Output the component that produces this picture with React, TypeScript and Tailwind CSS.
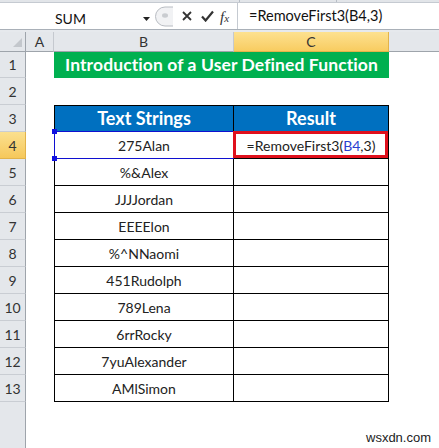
import React from "react";

const rows: { n: number; b: string }[] = [
  { n: 5, b: "%&Alex" },
  { n: 6, b: "JJJJordan" },
  { n: 7, b: "EEEElon" },
  { n: 8, b: "%^NNaomi" },
  { n: 9, b: "451Rudolph" },
  { n: 10, b: "789Lena" },
  { n: 11, b: "6rrRocky" },
  { n: 12, b: "7yuAlexander" },
  { n: 13, b: "AMlSimon" },
];

const font = { fontFamily: "Lato, 'Open Sans', sans-serif" };

function RowHead({ n, active }: { n?: number; active?: boolean }) {
  return (
    <div
      className={
        "flex items-end justify-center pb-[2px] text-[14px] border-r border-b " +
        (active
          ? "bg-gradient-to-b from-[#fbe08e] to-[#f6c85a] border-r-[#e2b34a] border-b-[#e2b34a] text-[#333]"
          : "bg-[#e4e7eb] border-r-[#9ea4ab] border-b-[#c9cdd3] text-[#333]")
      }
    >
      {n}
    </div>
  );
}

export default function App() {
  return (
    <div
      className="w-[439px] h-[448px] bg-white overflow-hidden relative flex flex-col text-[#222]"
      style={font}
    >
      {/* top strip */}
      <div className="h-[3px] bg-[#e2e5e9] border-b border-[#c5cad1] flex">
        <div className="w-[240px] border-r border-[#b8bec6]" />
        <div className="w-[97px] border-r border-[#b8bec6]" />
      </div>
      {/* formula bar */}
      <div className="h-[27px] flex bg-white border-b border-[#a9b0b8]">
        <div className="w-[153px] flex items-center relative">
          <span className="absolute left-[55px] top-[5px] text-[14px] text-[#111]">SUM</span>
          <svg className="absolute left-[143px] top-[14px]" width="7" height="4" viewBox="0 0 7 4">
            <path d="M0 0H7L3.5 4Z" fill="#222" />
          </svg>
        </div>
        <div className="w-[84px] flex items-center relative">
          <svg className="absolute left-[2px] top-[3px]" width="18" height="21" viewBox="0 0 18 21">
            <path d="M18 1H10A9.5 9.5 0 0 0 10 20H18" fill="#f1f2f4" stroke="#b8bcc2" />
            <ellipse cx="10" cy="9.5" rx="3" ry="2.2" fill="#c9ccd0" />
          </svg>
          <svg className="absolute left-[29px] top-[8px]" width="10" height="10" viewBox="0 0 10 10">
            <path d="M1 1L9 9M9 1L1 9" stroke="#333" strokeWidth="1.8" />
          </svg>
          <svg className="absolute left-[48px] top-[7px]" width="13" height="12" viewBox="0 0 13 12">
            <path d="M1 6.5L4.6 10.5L12 1.5" stroke="#333" strokeWidth="2.2" fill="none" />
          </svg>
          <span
            className="absolute left-[67px] top-[3px] text-[15px] italic text-[#333]"
            style={{ fontFamily: "'Liberation Serif', serif" }}
          >
            f<span className="text-[11px]">x</span>
          </span>
        </div>
        <div className="flex-1 border-l border-[#c5cad1] flex items-center pl-[11px] text-[14.5px] text-[#111]">
          =RemoveFirst3(B4,3)
        </div>
      </div>
      <div className="h-[2px] bg-[#e6e9ed]" />
      {/* sheet */}
      <div
        className="flex-1 grid grid-cols-[26px_28px_180px_155px_1fr] grid-rows-[20px_26px_repeat(12,27px)_1fr]"
        style={font}
      >
        {/* column headers */}
        <div className="bg-[#e4e7eb] border-r border-b border-[#9ea4ab] relative">
          <svg className="absolute left-[13px] top-[6px]" width="9" height="9" viewBox="0 0 9 9">
            <path d="M9 0V9H0Z" fill="#c3c7cc" />
          </svg>
        </div>
        <div className="bg-[#e4e7eb] border-r border-b border-r-[#c5c9cf] border-b-[#9ea4ab] flex items-center justify-center text-[14px] text-[#333]">
          A
        </div>
        <div className="bg-[#e4e7eb] border-r border-b border-r-[#c5c9cf] border-b-[#9ea4ab] flex items-center justify-center text-[14px] text-[#333]">
          B
        </div>
        <div className="bg-gradient-to-b from-[#fde18f] to-[#f8cc60] border-r border-b border-[#e2b34a] flex items-center justify-center text-[14px] text-[#333]">
          C
        </div>
        <div className="bg-[#e4e7eb] border-b border-[#9ea4ab]" />

        {/* row 1 */}
        <RowHead n={1} />
        <div />
        <div className="col-span-2 bg-[#00b050] flex items-center justify-center text-white font-bold text-[17.5px] tracking-[0.1px]">
          Introduction of a User Defined Function
        </div>
        <div />

        {/* row 2 */}
        <RowHead n={2} />
        <div />
        <div />
        <div />
        <div />

        {/* row 3 */}
        <RowHead n={3} />
        <div />
        <div className="bg-[#0070c0] border border-black flex items-center justify-center text-white font-bold text-[18px]">
          Text Strings
        </div>
        <div className="bg-[#0070c0] border-t border-r border-b border-black flex items-center justify-center text-white font-bold text-[18px]">
          Result
        </div>
        <div />

        {/* row 4 */}
        <RowHead n={4} active />
        <div />
        <div className="border-l border-r border-b border-black flex items-center justify-center text-[14px] relative">
          275Alan
          <div className="absolute -left-[1px] -top-[1px] -right-[1px] -bottom-[1px] border border-[#1010d0]" />
          <div className="absolute -left-[3px] -top-[3px] w-[5px] h-[5px] bg-[#1010e0]" />
          <div className="absolute -left-[3px] -bottom-[3px] w-[5px] h-[5px] bg-[#1010e0]" />
        </div>
        <div className="border-r border-b border-black flex items-center justify-center text-[14px] relative">
          <span>
            =RemoveFirst3(<span className="text-[#2a3fd0]">B4</span>,3)
          </span>
          <div className="absolute -left-[1px] -top-[1px] right-0 bottom-0 border-[3px] border-[#e0101c]" />
        </div>
        <div />

        {rows.map((r) => (
          <React.Fragment key={r.n}>
            <RowHead n={r.n} />
            <div />
            <div className="border-l border-r border-b border-black flex items-center justify-center text-[14px]">
              {r.b}
            </div>
            <div className="border-r border-b border-black" />
            <div />
          </React.Fragment>
        ))}

        {/* rest */}
        <div className="bg-[#e4e7eb] border-r border-[#9ea4ab]" />
        <div />
        <div />
        <div />
        <div />
      </div>
      <div
        className="absolute left-[366px] top-[428px] text-[13px] text-[#222]"
        style={{ fontFamily: "'Liberation Sans', sans-serif" }}
      >
        wsxdn.com
      </div>
    </div>
  );
}
